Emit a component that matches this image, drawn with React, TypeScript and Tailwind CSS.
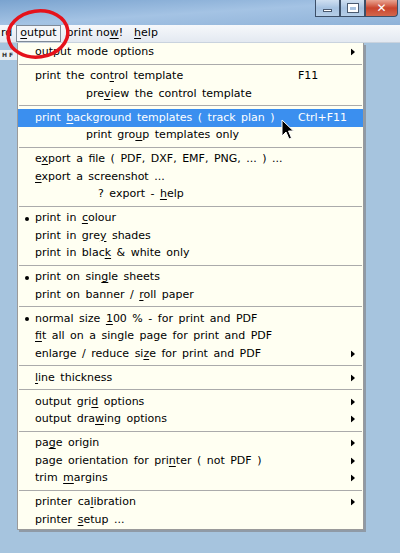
import React from 'react';

type Row =
  | 'sep'
  | {
      text: string;
      indent?: number;
      shortcut?: string;
      sub?: boolean;
      bullet?: boolean;
      hl?: boolean;
    };

// '_' marks the mnemonic letter, like the '&' in a win32 menu resource
const rows: Row[] = [
  { text: 'output mode options', sub: true },
  'sep',
  { text: 'print the con_trol template', shortcut: 'F11' },
  { text: 'pre_view the control template', indent: 51 },
  'sep',
  { text: 'print _background templates ( track plan )', shortcut: 'Ctrl+F11', hl: true },
  { text: 'print gro_up templates only', indent: 51 },
  'sep',
  { text: 'e_xport a file ( PDF, DXF, EMF, PNG, ... ) ...' },
  { text: '_export a screenshot ...' },
  { text: '? export - _help', indent: 63 },
  'sep',
  { text: 'print in _colour', bullet: true },
  { text: 'print in gre_y shades' },
  { text: 'print in blac_k & white only' },
  'sep',
  { text: 'print on sin_gle sheets', bullet: true },
  { text: 'print on banner / _roll paper' },
  'sep',
  { text: 'normal size _100 % - for print and PDF', bullet: true },
  { text: '_fit all on a single page for print and PDF' },
  { text: 'enlarge / reduce si_ze for print and PDF', sub: true },
  'sep',
  { text: '_line thickness', sub: true },
  'sep',
  { text: 'output gri_d options', sub: true },
  { text: 'output dra_wing options', sub: true },
  'sep',
  { text: 'pa_ge origin', sub: true },
  { text: 'page orientation for pri_nter ( not PDF )', sub: true },
  { text: 'trim _margins', sub: true },
  'sep',
  { text: 'printer ca_libration', sub: true },
  { text: 'printer _setup ...' },
];

function Mnemonic({ text }: { text: string }) {
  const i = text.indexOf('_');
  if (i < 0) return <>{text}</>;
  return (
    <>
      {text.slice(0, i)}
      <span className="underline underline-offset-[2px]">{text[i + 1]}</span>
      {text.slice(i + 2)}
    </>
  );
}

function SubArrow({ light }: { light?: boolean }) {
  return (
    <svg width="4" height="7" viewBox="0 0 4 7" className="absolute right-[8px] top-1/2 -translate-y-1/2">
      <path d="M0 0 L4 3.5 L0 7 Z" fill={light ? '#fff' : '#000'} />
    </svg>
  );
}

function WinButton({ children, close }: { children: React.ReactNode; close?: boolean }) {
  return (
    <div
      className={`h-[17px] flex items-center justify-center border border-[#3c4f68] border-t-0 ${
        close
          ? 'w-[33px] rounded-br-[4px] bg-gradient-to-b from-[#e8a493] via-[#c9432c] to-[#d2664c]'
          : 'w-[25px] bg-gradient-to-b from-[#dce8f5]/80 via-[#a9c3e0]/70 to-[#bcd3ea]/80'
      }`}
    >
      {children}
    </div>
  );
}

export default function App() {
  return (
    <div
      className="relative w-[400px] h-[553px] overflow-hidden bg-[#a6c4de] flex flex-col text-black"
      style={{ fontFamily: '"DejaVu Sans", Verdana, sans-serif' }}
    >
      {/* aero title bar */}
      <div className="h-[25px] shrink-0 bg-gradient-to-br from-[#7aa3cf] via-[#a4c3e4] to-[#8fb2d8] flex justify-end pr-[2px]">
        <div className="flex rounded-b-[4px] overflow-hidden">
          <WinButton>
            <div className="w-[9px] h-[3px] bg-white border border-[#4a5a70] mt-[5px]" />
          </WinButton>
          <WinButton>
            <div className="w-[10px] h-[8px] border-2 border-t-[3px] border-white outline outline-1 outline-[#4a5a70]" />
          </WinButton>
          <WinButton close>
            <span className="text-white font-bold text-[12px] leading-none" style={{ fontFamily: '"DejaVu Sans", sans-serif' }}>
              ✕
            </span>
          </WinButton>
        </div>
      </div>

      {/* menu bar */}
      <div className="h-[18px] shrink-0 bg-gradient-to-b from-[#f6f8fb] to-[#e3e9f1] flex items-center text-[11px] border-b border-[#c9d3de]">
        <span className="ml-[1px] mr-[4px]">rd</span>
        <span className="h-[17px] px-[3px] flex items-center border border-[#7f8a98] bg-[#f4f6f9]">
          <Mnemonic text="_output" />
        </span>
        <span className="ml-[6px]">
          <Mnemonic text="print no_w!" />
        </span>
        <span className="ml-[11px]">
          <Mnemonic text="_help" />
        </span>
      </div>

      <div className="flex flex-1 min-h-0">
        {/* strip of the toolbar peeking out behind the menu */}
        <div className="w-[17px] shrink-0">
          <div className="mt-[7px] h-[10px] bg-[#e9eef4] text-[6px] leading-[10px] pl-[2px] font-bold text-[#333]">H F</div>
        </div>

        {/* dropdown */}
        <div className="w-[347px] self-start bg-[#fffff2] border border-[#9a9a9a] border-t-0 shadow-[2px_2px_0_#8f9aa6] text-[11px] py-[0.5px]">
          {rows.map((r, i) =>
            r === 'sep' ? (
              <div key={i} className="h-[6.5px] flex items-center px-[1px]">
                <div className="h-px w-full bg-[#ababab]" />
              </div>
            ) : (
              <div
                key={i}
                className={`relative h-[17.5px] flex items-center whitespace-pre [word-spacing:2px] ${
                  r.hl ? 'bg-[#3b8fef] text-white' : ''
                }`}
                style={{ paddingLeft: 17 + (r.indent ?? 0) }}
              >
                {r.bullet && <span className="absolute left-[7px] top-[7px] w-[4px] h-[4px] rounded-full bg-black" />}
                <span>
                  <Mnemonic text={r.text} />
                </span>
                {r.shortcut && <span className="absolute left-[280px]">{r.shortcut}</span>}
                {r.sub && <SubArrow light={r.hl} />}
              </div>
            ),
          )}
        </div>
      </div>

      {/* red ring drawn round the menu title */}
      <svg className="absolute left-0 top-0 pointer-events-none" width="80" height="70">
        <ellipse cx="38" cy="34" rx="30" ry="23" fill="none" stroke="#e5121b" strokeWidth="3.5" transform="rotate(-8 38 34)" />
      </svg>

      {/* mouse pointer */}
      <svg className="absolute left-[281px] top-[119px] pointer-events-none" width="14" height="22" viewBox="0 0 14 22">
        <path d="M1 1 L1 17 L5 13 L8 20 L10.5 19 L7.5 12 L12.5 12 Z" fill="#000" stroke="#fff" strokeWidth="1" />
      </svg>
    </div>
  );
}
